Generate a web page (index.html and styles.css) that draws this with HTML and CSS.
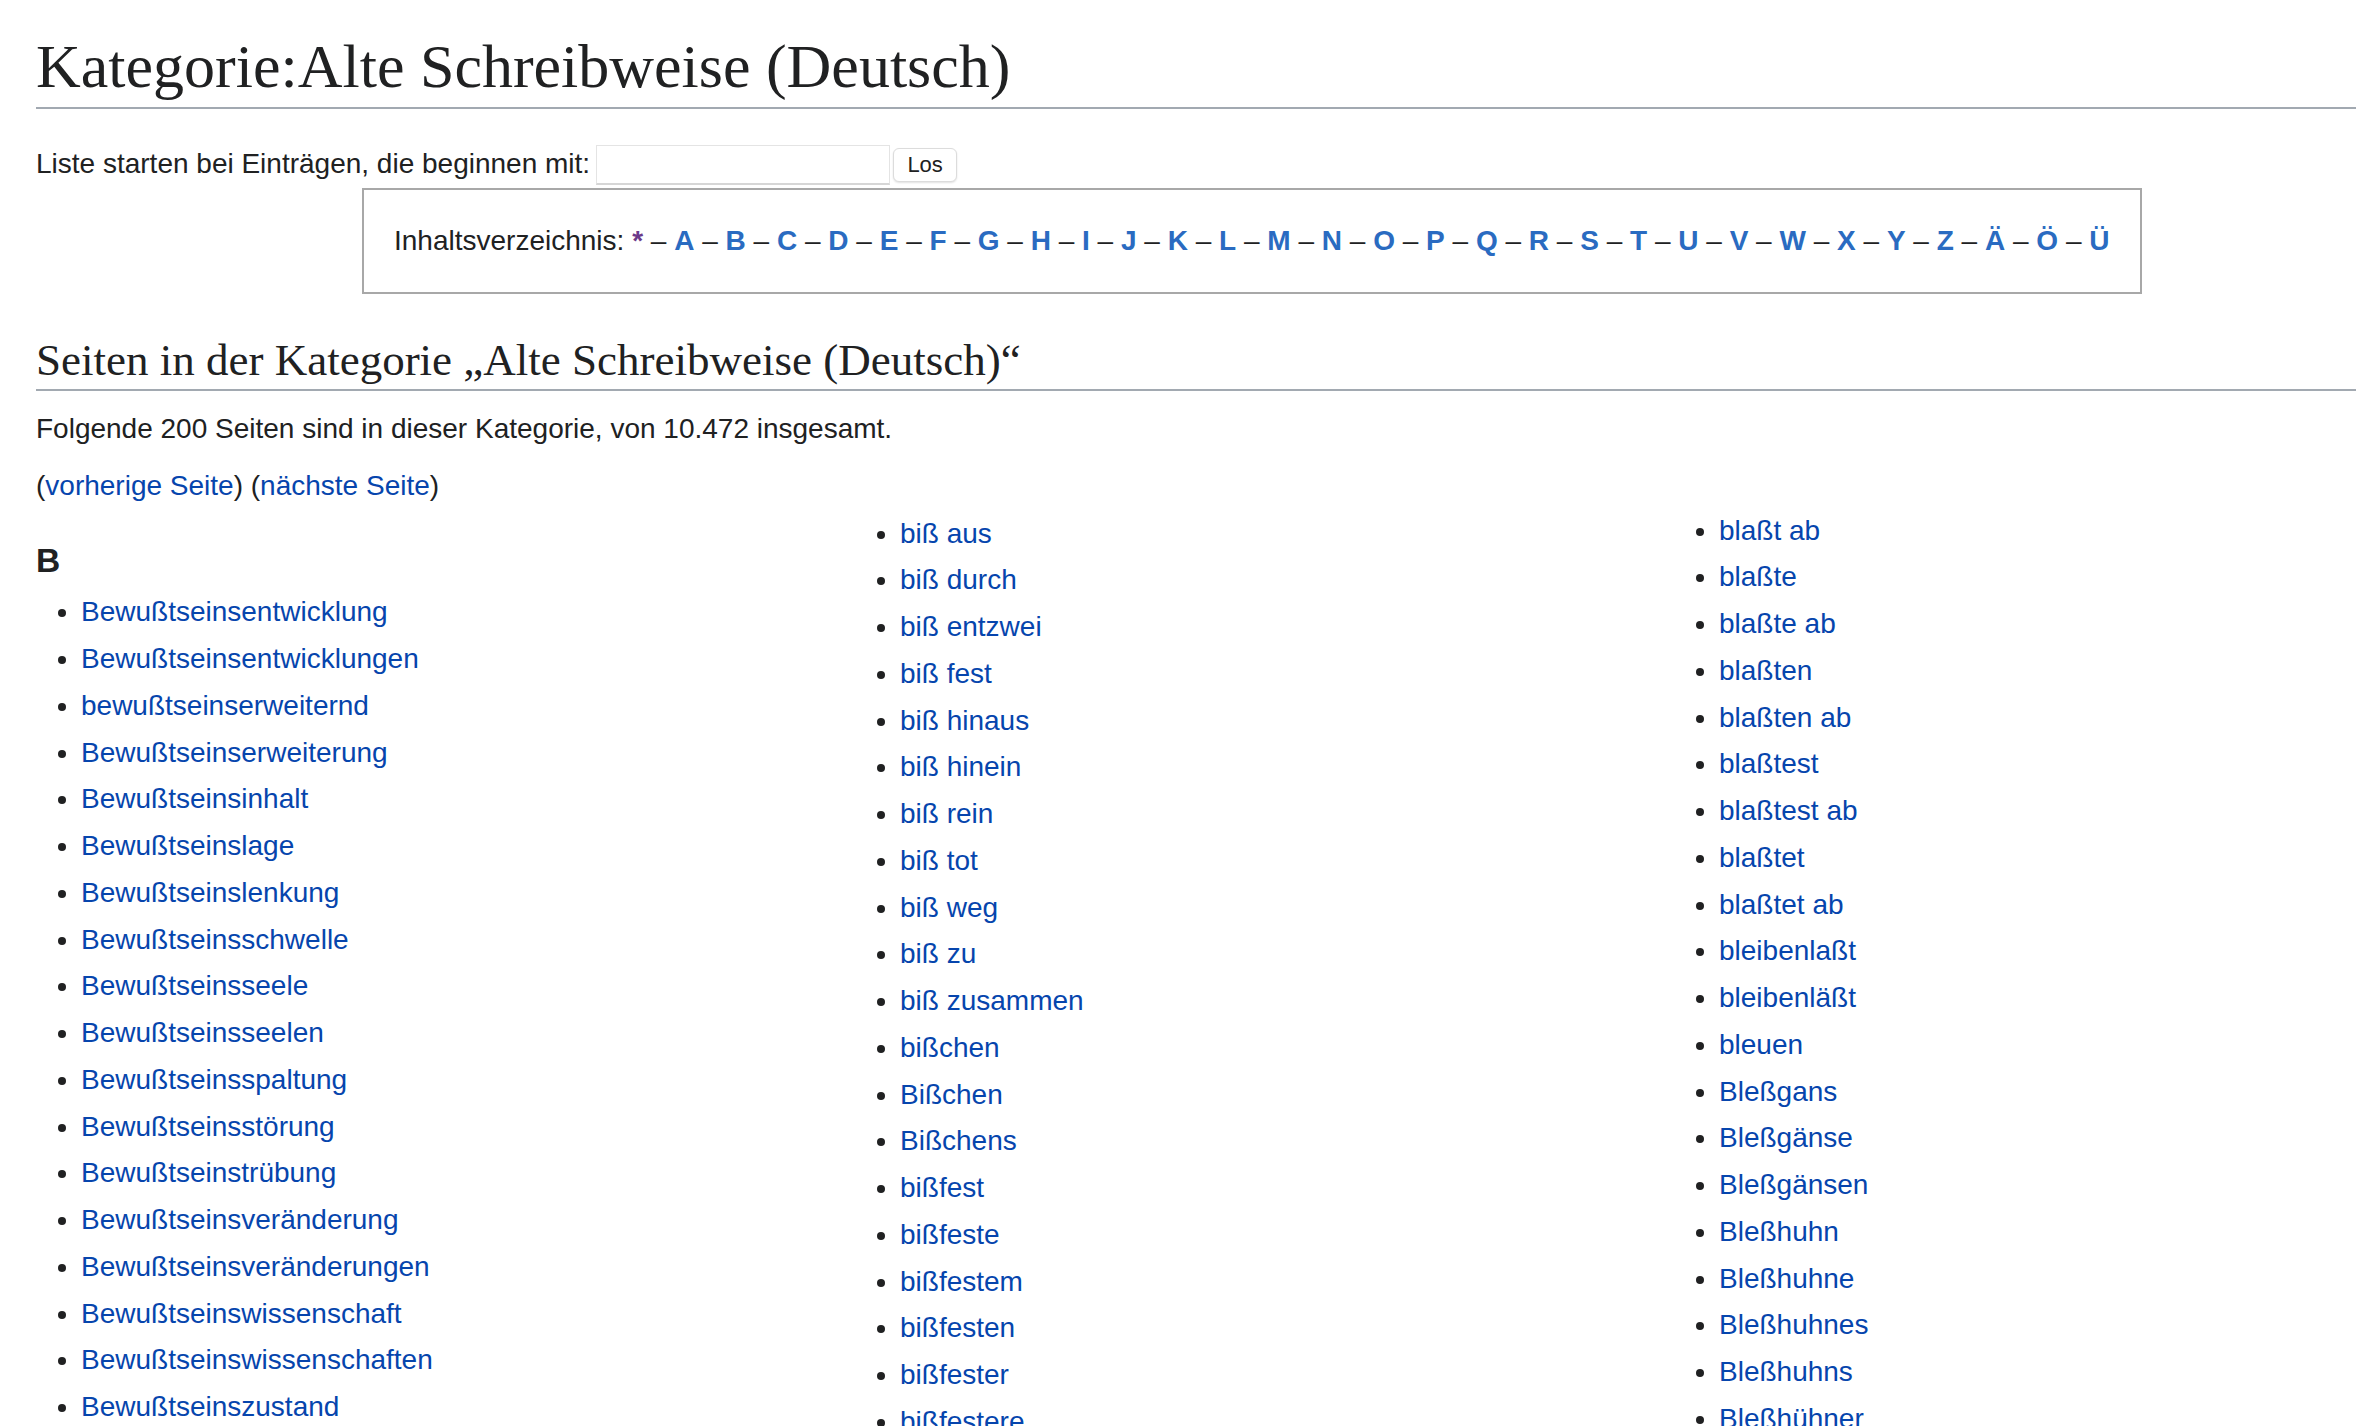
FILE: index.html
```html
<!DOCTYPE html>
<html lang="de">
<head>
<meta charset="utf-8">
<title>Kategorie:Alte Schreibweise (Deutsch)</title>
<link rel="stylesheet" href="styles.css">
</head>
<body>
<div class="page">
  <h1 class="title">Kategorie:Alte Schreibweise (Deutsch)</h1>
  <form class="search">
    <label>Liste starten bei Einträgen, die beginnen mit:</label>
    <input type="text" class="search-input">
    <button type="button" class="search-btn">Los</button>
  </form>
  <div class="toc">
    <span class="toc-label">Inhaltsverzeichnis:</span> <a class="toc-star">*</a> – <a>A</a> – <a>B</a> – <a>C</a> – <a>D</a> – <a>E</a> – <a>F</a> – <a>G</a> – <a>H</a> – <a>I</a> – <a>J</a> – <a>K</a> – <a>L</a> – <a>M</a> – <a>N</a> – <a>O</a> – <a>P</a> – <a>Q</a> – <a>R</a> – <a>S</a> – <a>T</a> – <a>U</a> – <a>V</a> – <a>W</a> – <a>X</a> – <a>Y</a> – <a>Z</a> – <a>Ä</a> – <a>Ö</a> – <a>Ü</a>
  </div>
  <h2 class="subtitle">Seiten in der Kategorie „Alte Schreibweise (Deutsch)“</h2>
  <p class="count">Folgende 200 Seiten sind in dieser Kategorie, von 10.472 insgesamt.</p>
  <p class="nav">(<a>vorherige Seite</a>) (<a>nächste Seite</a>)</p>
  <div class="columns">
    <div class="col col1">
      <h3 class="group">B</h3>
      <ul>
        <li><a>Bewußtseinsentwicklung</a></li>
        <li><a>Bewußtseinsentwicklungen</a></li>
        <li><a>bewußtseinserweiternd</a></li>
        <li><a>Bewußtseinserweiterung</a></li>
        <li><a>Bewußtseinsinhalt</a></li>
        <li><a>Bewußtseinslage</a></li>
        <li><a>Bewußtseinslenkung</a></li>
        <li><a>Bewußtseinsschwelle</a></li>
        <li><a>Bewußtseinsseele</a></li>
        <li><a>Bewußtseinsseelen</a></li>
        <li><a>Bewußtseinsspaltung</a></li>
        <li><a>Bewußtseinsstörung</a></li>
        <li><a>Bewußtseinstrübung</a></li>
        <li><a>Bewußtseinsveränderung</a></li>
        <li><a>Bewußtseinsveränderungen</a></li>
        <li><a>Bewußtseinswissenschaft</a></li>
        <li><a>Bewußtseinswissenschaften</a></li>
        <li><a>Bewußtseinszustand</a></li>
        <li><a>Bewußtseinszustände</a></li>
      </ul>
    </div>
    <div class="col col2">
      <ul>
        <li><a>biß aus</a></li>
        <li><a>biß durch</a></li>
        <li><a>biß entzwei</a></li>
        <li><a>biß fest</a></li>
        <li><a>biß hinaus</a></li>
        <li><a>biß hinein</a></li>
        <li><a>biß rein</a></li>
        <li><a>biß tot</a></li>
        <li><a>biß weg</a></li>
        <li><a>biß zu</a></li>
        <li><a>biß zusammen</a></li>
        <li><a>bißchen</a></li>
        <li><a>Bißchen</a></li>
        <li><a>Bißchens</a></li>
        <li><a>bißfest</a></li>
        <li><a>bißfeste</a></li>
        <li><a>bißfestem</a></li>
        <li><a>bißfesten</a></li>
        <li><a>bißfester</a></li>
        <li><a>bißfestere</a></li>
      </ul>
    </div>
    <div class="col col3">
      <ul>
        <li><a>blaßt ab</a></li>
        <li><a>blaßte</a></li>
        <li><a>blaßte ab</a></li>
        <li><a>blaßten</a></li>
        <li><a>blaßten ab</a></li>
        <li><a>blaßtest</a></li>
        <li><a>blaßtest ab</a></li>
        <li><a>blaßtet</a></li>
        <li><a>blaßtet ab</a></li>
        <li><a>bleibenlaßt</a></li>
        <li><a>bleibenläßt</a></li>
        <li><a>bleuen</a></li>
        <li><a>Bleßgans</a></li>
        <li><a>Bleßgänse</a></li>
        <li><a>Bleßgänsen</a></li>
        <li><a>Bleßhuhn</a></li>
        <li><a>Bleßhuhne</a></li>
        <li><a>Bleßhuhnes</a></li>
        <li><a>Bleßhuhns</a></li>
        <li><a>Bleßhühner</a></li>
      </ul>
    </div>
  </div>
</div>
</body>
</html>
```
FILE: styles.css
```css
html, body {
  margin: 0;
  padding: 0;
  background: #ffffff;
  overflow: hidden;
}
body {
  font-family: "Liberation Sans", Arial, sans-serif;
  font-size: 28px;
  color: #202122;
  line-height: 1.6;
}
.page {
  padding: 0 0 0 36px;
  width: 2600px;
}
a {
  color: #0645ad;
  text-decoration: none;
  cursor: pointer;
}
.title {
  font-family: "Liberation Serif", "Times New Roman", serif;
  font-weight: normal;
  font-size: 62px;
  line-height: 1.3;
  margin: 0;
  padding: 26px 0 0 0;
  border-bottom: 2px solid #a2a9b1;
}
.search {
  display: flex;
  align-items: center;
  margin: 36px 0 0 0;
  height: 40px;
}
.search label {
  margin-right: 6px;
}
.search-input {
  width: 294px;
  height: 40px;
  box-sizing: border-box;
  border: 1px solid #e4e4e4;
  border-bottom: 2px solid #d6d6d6;
  padding: 0;
  margin: 0;
  background: #fff;
}
.search-btn {
  margin-left: 3px;
  height: 34px;
  width: 64px;
  border: 1px solid #dcdcdc;
  border-radius: 6px;
  background: #fff;
  box-shadow: 0 1px 2px rgba(0,0,0,0.12);
  font-family: "Liberation Sans", Arial, sans-serif;
  font-size: 22px;
  color: #202122;
  padding: 0;
}
.toc {
  display: inline-block;
  margin: 3px 0 0 326px;
  border: 2px solid #a8a8a8;
  padding: 29px 30px 29px 30px;
  line-height: 44px;
  white-space: nowrap;
}
.toc a {
  color: #2a6bc1;
  font-weight: bold;
}
.toc a.toc-star {
  color: #6b3a8a;
}
.subtitle {
  font-family: "Liberation Serif", "Times New Roman", serif;
  font-weight: normal;
  font-size: 45px;
  line-height: 1.3;
  margin: 37px 0 0 0;
  border-bottom: 2px solid #a2a9b1;
}
.count {
  margin: 16px 0 0 0;
}
.nav {
  margin: 12px 0 0 0;
}
.columns {
  display: grid;
  grid-template-columns: 819px 819px 819px;
}
.col ul {
  margin: 0;
  padding: 0 0 0 45px;
  list-style: disc;
}
.col li {
  margin-bottom: 1.96px;
}
.col2 {
  padding-top: 3px;
}
.col3 {
  padding-top: 0;
}
.group {
  font-size: 33.6px;
  font-weight: bold;
  margin: 25px 0 3px 0;
  line-height: 1.6;
}
```
